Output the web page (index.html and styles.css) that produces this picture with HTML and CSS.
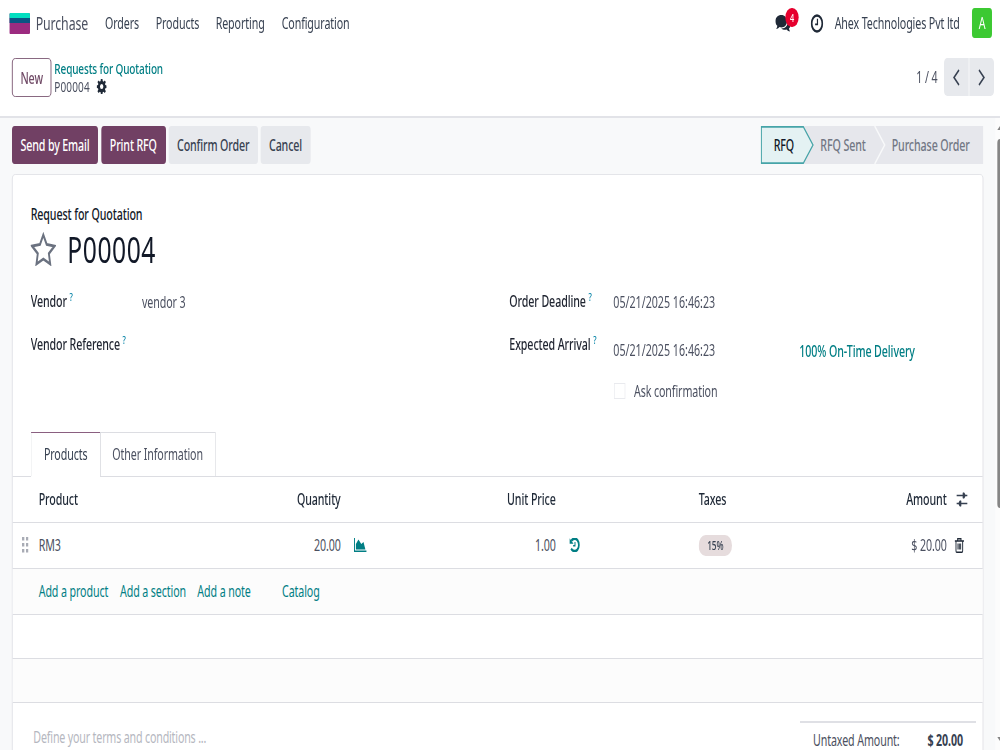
FILE: index.html
```html
<!DOCTYPE html>
<html lang="en">
<head>
  <meta charset="UTF-8" />
  <meta name="viewport" content="width=device-width, initial-scale=1.0" />
  <title>P00004 - Purchase</title>
  <link rel="stylesheet" href="styles.css">
</head>
<body>
  <div class="page">
    <header class="navbar">
      <svg class="logo" viewBox="0 0 30 21" preserveAspectRatio="none">
        <rect width="30" height="21" rx="1.5" fill="#9c2b80"/>
        <path d="M0 5h30v5H0z" fill="#0b5583"/>
        <path d="M0 5V1.5Q0 0 1.5 0h27Q30 0 30 1.5V5z" fill="#02dfc0"/>
      </svg>
      <span class="app-name">Purchase</span>
      <nav class="menu">
        <a class="m-orders">Orders</a>
        <a class="m-products">Products</a>
        <a class="m-reporting">Reporting</a>
        <a class="m-config">Configuration</a>
      </nav>
      <div class="systray">
        <div class="messages">
          <svg width="23" height="17" viewBox="0 0 23 17">
            <path d="M9 0c5 0 8.500 2.700 8.500 6.200S14 12.400 9 12.400c-1 0-1.800-.1-2.600-.3C4.800 13.400 3 14 1.200 14c1-.9 1.700-1.900 1.800-3.200C1.100 9.700 0 8 0 6.200 0 2.700 4 0 9 0z" fill="#1f2937"/>
            <path d="M19.500 5c2.200 1.100 3.500 2.700 3.500 4.600 0 1.600-.9 3-2.500 4 .1 1.100.8 2 1.700 2.900-2.200 0-4-.7-5.300-1.900-3 .5-6 .1-8.200-1.100 6 .3 10.800-3 10.800-8.500z" fill="#1f2937"/>
          </svg>
          <span class="badge">4</span>
        </div>
        <svg class="clock" width="19" height="19" viewBox="0 0 19 19" fill="none" stroke="#1f2937">
          <circle cx="9.500" cy="9.500" r="8" stroke-width="2.600"/>
          <path d="M10.200 4.800v5.500H6.700" stroke-width="1.800"/>
        </svg>
        <span class="company">Ahex Technologies Pvt ltd</span>
        <span class="avatar">A</span>
      </div>
    </header>

    <div class="control-panel">
      <button class="btn btn-new">New</button>
      <div class="breadcrumb">
        <a class="crumb">Requests for Quotation</a>
        <div class="current">
          <span class="current-name">P00004</span>
          <svg width="15" height="15" viewBox="0 0 16 16">
            <path fill="#1f2937" fill-rule="evenodd" d="M6.700 0h2.600l.4 2.200 1.300.6L12.900 1.500l1.800 1.800-1.400 1.900.6 1.300 2.100.4v2.600l-2.100.4-.6 1.300 1.400 1.900-1.800 1.800-1.900-1.400-1.300.6-.4 1.900H6.700l-.4-1.900-1.300-.6-1.900 1.400-1.800-1.800 1.400-1.900-.6-1.300L0 9.500V6.900l2.100-.4.6-1.300-1.400-1.900 1.800-1.800L5 2.800l1.300-.6zM8 5.300a2.700 2.700 0 1 0 0 5.400 2.700 2.700 0 0 0 0-5.400z"/>
          </svg>
        </div>
      </div>
      <div class="pager">
        <span class="pager-count">1 / 4</span>
        <button class="pager-btn prev"><svg width="11" height="17" viewBox="0 0 11 17"><path d="M9.500 1 2 8.500 9.500 16"/></svg></button>
        <button class="pager-btn next"><svg width="11" height="17" viewBox="0 0 11 17"><path d="M1.500 1 9 8.500 1.500 16"/></svg></button>
      </div>
    </div>

    <main class="form">
      <div class="statusbar">
        <button class="btn btn-primary b-send">Send by Email</button>
        <button class="btn btn-primary b-print">Print RFQ</button>
        <button class="btn btn-secondary b-confirm">Confirm Order</button>
        <button class="btn btn-secondary b-cancel">Cancel</button>
        <div class="stages">
          <svg class="stage-shapes" width="334" height="38" viewBox="0 0 334 38">
            <path d="M60 0h274v38H60z" fill="#e6e7ec"/>
            <path d="M171 0l15 19-15 19" fill="none" stroke="#f8f9fa" stroke-width="2"/>
            <path d="M1 .8h63L78.500 19 64 37.200H1z" fill="#e4f2f3" stroke="#46a4a8" stroke-width="1.700"/>
          </svg>
          <span class="stage active">RFQ</span>
          <span class="stage sent">RFQ Sent</span>
          <span class="stage order">Purchase Order</span>
        </div>
      </div>

      <section class="sheet">
        <div class="title">
          <div class="title-label">Request for Quotation</div>
          <div class="title-name">
            <svg width="38" height="34" viewBox="0 0 38 34" preserveAspectRatio="none">
              <path d="M19 2.800l5 9.700 11.800 1.600-8.500 7.500 2 10.400L19 27.100 8.700 32l2-10.400-8.500-7.500L14 12.500z" fill="none" stroke="#6b7280" stroke-width="2.800"/>
            </svg>
            <h1>P00004</h1>
          </div>
        </div>

        <div class="fields">
          <div class="column">
            <div class="field">
              <label class="l-vendor">Vendor<sup>?</sup></label>
              <span class="value">vendor 3</span>
            </div>
            <div class="field">
              <label class="l-reference">Vendor Reference<sup>?</sup></label>
            </div>
          </div>
          <div class="column column-right">
            <div class="field">
              <label class="l-deadline">Order Deadline<sup>?</sup></label>
              <span class="value date">05/21/2025 16:46:23</span>
            </div>
            <div class="field field-arrival">
              <label class="l-arrival">Expected Arrival<sup>?</sup></label>
              <span class="value date">05/21/2025 16:46:23</span>
              <a class="on-time">100% On-Time Delivery</a>
            </div>
            <div class="confirmation">
              <span class="checkbox"></span>
              <span class="ask">Ask confirmation</span>
            </div>
          </div>
        </div>

        <div class="tabs">
          <a class="tab active">Products</a>
          <a class="tab other">Other Information</a>
        </div>

        <div class="lines">
          <div class="row head">
            <span></span>
            <span>Product</span>
            <span class="num">Quantity</span>
            <span></span>
            <span class="num">Unit Price</span>
            <span></span>
            <span>Taxes</span>
            <span class="num">Amount</span>
            <span class="icon-end">
              <svg width="18" height="15" viewBox="0 0 18 15" stroke="#374151" fill="#374151">
                <path d="M1 3.500h16M1 11.500h16" stroke-width="1.600"/>
                <path d="M11 0v7l4-3.500zM7 8v7l-4-3.500z" stroke="none"/>
                <path d="M10 .8h3v5.400h-3zM5 8.800h3v5.400H5z" stroke="none"/>
              </svg>
            </span>
          </div>
          <div class="row">
            <span class="handle">
              <svg width="10" height="16" viewBox="0 0 10 16" fill="#a9acb5">
                <path d="M0 0h3.500v3.500H0zM6 0h3.500v3.500H6zM0 6h3.500v3.500H0zM6 6h3.500v3.500H6zM0 12h3.500v3.500H0zM6 12h3.500v3.500H6z"/>
              </svg>
            </span>
            <span>RM3</span>
            <span class="num">20.00</span>
            <span class="icon">
              <svg width="19" height="14" viewBox="0 0 20 14" preserveAspectRatio="none" fill="#017e84">
                <path d="M0 0h1.500v12.500H20V14H0zM3 11.500V6l4-4.500L11.500 6 15 4l3 7.500z"/>
              </svg>
            </span>
            <span class="num">1.00</span>
            <span class="icon">
              <svg width="16" height="14" viewBox="0 0 16 14" fill="none" stroke="#017e84">
                <path d="M3 2.800C6-.2 10 .3 12.300 2.300c2.700 2.600 2.700 6.800 0 9.200-2.600 2.300-7 2.200-9.600-.8" stroke-width="2.600"/>
                <path d="M.3.300v5.500h6z" fill="#017e84" stroke="none"/>
                <path d="M8.500 4v3.800H5.700" stroke-width="1.500"/>
              </svg>
            </span>
            <span><span class="tag">15%</span></span>
            <span class="num">$ 20.00</span>
            <span class="icon-end trash">
              <svg width="14" height="15" viewBox="0 0 14 15" fill="none" stroke="#1f2937">
                <path d="M0 3h14M4.500 3V.8h5V3" stroke-width="1.500"/>
                <path d="M2 3v10q0 1.200 1.200 1.200h7.600Q12 14.200 12 13V3M5 5.500v6M7 5.500v6M9 5.500v6" stroke-width="1.400"/>
              </svg>
            </span>
          </div>
          <div class="row-links">
            <a class="a-product">Add a product</a>
            <a class="a-section">Add a section</a>
            <a class="a-note">Add a note</a>
            <a class="a-catalog">Catalog</a>
          </div>
          <div class="row-empty"></div>
          <div class="row-empty shaded"></div>
        </div>

        <div class="footer">
          <div class="terms">Define your terms and conditions ...</div>
          <div class="totals">
            <span class="untaxed">Untaxed Amount:</span>
            <strong>$ 20.00</strong>
          </div>
        </div>
      </section>

      <div class="scrollbar">
        <span class="arrow up"></span>
        <span class="thumb"></span>
        <span class="arrow down"></span>
      </div>
    </main>
  </div>
</body>
</html>
```
FILE: styles.css
```css
* {
  box-sizing: border-box;
}
html {
  overflow: hidden;
}
body {
  width: 1000px;
  height: 750px;
  margin: 0;
  overflow: hidden;
  background: #fff;
}
/* laid out 1500px wide, then condensed to the window */
.page {
  display: flex;
  flex-direction: column;
  width: 1500px;
  height: 750px;
  margin-right: -500px;
  overflow: hidden;
  transform: scaleX(0.66666);
  transform-origin: 0 0;
  font-family: "Noto Sans", "Open Sans", sans-serif;
  font-size: 16px;
  line-height: 20px;
  letter-spacing: -0.15px;
  color: #4b5060;
  white-space: nowrap;
}
h1 {
  margin: 0;
}
svg {
  display: block;
  flex: none;
}

/* top bar */
.navbar {
  display: flex;
  align-items: center;
  height: 46px;
  padding: 0 12px 0 13.5px;
}
.logo {
  width: 31px;
  height: 21px;
}
.app-name {
  width: 104px;
  margin-left: 9px;
  font-size: 18.5px;
}
.menu {
  display: flex;
  color: #374151;
}
.m-orders {
  width: 76px;
}
.m-products {
  width: 90px;
}
.m-reporting {
  width: 99px;
}
.systray {
  display: flex;
  align-items: center;
  margin-left: auto;
  color: #374151;
}
.messages {
  position: relative;
  width: 53px;
}
.badge {
  position: absolute;
  left: 15px;
  top: -7px;
  width: 20px;
  height: 19px;
  border-radius: 10px;
  background: #e6002e;
  color: #fff;
  font-size: 11px;
  font-weight: 500;
  line-height: 19px;
  text-align: center;
}
.company {
  width: 206px;
  margin-left: 17px;
}
.avatar {
  width: 30px;
  height: 30px;
  border-radius: 4px;
  background: #3cc932;
  color: #fff;
  line-height: 30px;
  text-align: center;
}

/* breadcrumb and pager */
.control-panel {
  display: flex;
  align-items: flex-start;
  height: 72px;
  padding: 12px 9px 0 18px;
  border-bottom: 2px solid #e2e3e8;
}
.btn {
  height: 38px;
  padding: 0;
  border: 0;
  border-radius: 4px;
  font: inherit;
  font-weight: 500;
  letter-spacing: -0.2px;
}
.btn-new {
  width: 59px;
  height: 39px;
  border: 1.5px solid #714b67;
  border-radius: 5px;
  background: #fff;
  color: #714b67;
}
.breadcrumb {
  margin-left: 4.5px;
  padding-top: 1px;
  font-size: 15px;
  line-height: 18px;
}
.crumb {
  display: block;
  color: #017e84;
  font-weight: 500;
  letter-spacing: -0.2px;
}
.current {
  display: flex;
  align-items: center;
}
.current-name {
  width: 63px;
  letter-spacing: 0.2px;
}
.pager {
  display: flex;
  align-items: center;
  margin-left: auto;
}
.pager-count {
  width: 41px;
}
.pager-btn {
  display: flex;
  align-items: center;
  justify-content: center;
  width: 37px;
  height: 38px;
  padding: 0;
  border: 0;
  background: #e7e9ed;
}
.pager-btn path {
  fill: none;
  stroke: #374151;
  stroke-width: 2;
}
.prev {
  border-radius: 5px 0 0 5px;
}
.next {
  margin-left: 1.5px;
  border-radius: 0 5px 5px 0;
}

/* form */
.form {
  position: relative;
  flex: 1;
  min-height: 0;
  padding: 8px 25.5px 0 18px;
  background: #f8f9fa;
}
.statusbar {
  display: flex;
  gap: 4.5px;
  height: 38px;
}
.btn-primary {
  background: #714064;
  color: #fff;
}
.btn-secondary {
  background: #e7e9ed;
  color: #374151;
}
.b-send {
  width: 129px;
}
.b-print {
  width: 97px;
}
.b-confirm {
  width: 133.5px;
}
.b-cancel {
  width: 74.5px;
}
.stages {
  position: relative;
  display: flex;
  align-items: center;
  width: 334px;
  margin-left: auto;
  color: #727784;
  font-weight: 500;
}
.stage-shapes {
  position: absolute;
  left: 0;
  top: 0;
}
.stage {
  position: relative;
}
.stage.active {
  width: 70px;
  padding-left: 20px;
  color: #111827;
}
.stage.sent {
  width: 107px;
  padding-left: 20px;
}
.stage.order {
  padding-left: 20px;
}

/* sheet */
.sheet {
  height: 600px;
  margin-top: 10px;
  border: 1.5px solid #dfe0e5;
  border-radius: 5px;
  background: #fff;
}
.title {
  height: 105px;
  padding: 29px 27px 0;
  color: #111827;
}
.title-label {
  font-weight: 500;
}
.title-name {
  display: flex;
  align-items: center;
  gap: 17px;
  height: 50px;
}
.title-name h1 {
  font-size: 37px;
  font-weight: 400;
  line-height: 50px;
  letter-spacing: 0.8px;
}
.fields {
  display: grid;
  grid-template-columns: 718px 1fr;
  height: 151.5px;
  padding: 11px 27px 0;
}
.field {
  display: flex;
  height: 42.5px;
}
.field label {
  width: 167px;
  color: #1f2430;
  font-weight: 500;
}
.column-right .field label {
  width: 156px;
}
.field sup {
  margin-left: 4px;
  color: #0180a5;
  font-size: 11px;
  line-height: 0;
  vertical-align: 6px;
}
.value {
  padding-top: 1px;
}
.date {
  letter-spacing: 0;
}
.field-arrival .value {
  width: 279px;
  padding-top: 6px;
}
.on-time {
  padding-top: 7px;
  color: #017e84;
  font-weight: 500;
}
.confirmation {
  display: flex;
  align-items: center;
  gap: 13px;
  padding: 5px 0 0 157px;
}
.checkbox {
  width: 17px;
  height: 16px;
  border: 1.5px solid #e9eaee;
}

/* notebook */
.tabs {
  display: flex;
  height: 45px;
  padding-left: 27px;
  border-bottom: 1.5px solid #dcdde2;
}
.tab {
  height: 45px;
  border: 1.5px solid #dcdde2;
  line-height: 42px;
  text-align: center;
}
.tab.active {
  width: 105px;
  border-top-color: #8a5f80;
  border-bottom-color: #fff;
  background: #fff;
  color: #374151;
}
.tab.other {
  width: 174px;
  margin-left: -1.5px;
}
.row {
  display: grid;
  grid-template-columns: 39px 200px 253px 83px 239.5px 214.5px 200px 172px 1fr;
  align-items: center;
  height: 46px;
  border-bottom: 1.5px solid #dcdde2;
}
.head {
  color: #1f2937;
  font-weight: 500;
}
.num {
  text-align: right;
}
.handle {
  padding-left: 13.5px;
}
.icon {
  padding-left: 20px;
}
.icon-end {
  padding-left: 14px;
}
.icon-end.trash {
  padding-left: 12px;
}
.tag {
  display: inline-block;
  width: 50px;
  height: 21px;
  border-radius: 11px;
  background: #e6dcdd;
  color: #374151;
  font-size: 12.500px;
  font-weight: 500;
  line-height: 21px;
  text-align: center;
  vertical-align: middle;
}
.row-links {
  display: flex;
  align-items: center;
  height: 46px;
  padding-left: 39px;
  border-bottom: 1.5px solid #dcdde2;
  background: #fcfcfc;
  color: #017e84;
}
.a-product {
  width: 122px;
}
.a-section {
  width: 116px;
}
.a-note {
  width: 127px;
}
.row-empty {
  height: 44px;
  border-bottom: 1.5px solid #dcdde2;
}
.shaded {
  background: #fcfcfc;
}
.footer {
  display: flex;
  justify-content: space-between;
  padding: 18px 10px 0 31px;
}
.terms {
  padding-top: 6px;
  color: #b5b7c0;
  letter-spacing: -0.25px;
}
.totals {
  display: flex;
  justify-content: space-between;
  width: 264px;
  padding: 7px 19px 0 20px;
  border-top: 2px solid #dfe0e5;
}
.totals strong {
  color: #374151;
  font-weight: 700;
}

/* page scrollbar, cut by the window edge */
.scrollbar {
  position: absolute;
  top: 0;
  right: 0;
  bottom: 0;
  width: 7px;
  background: #fcfcfc;
}
.thumb {
  position: absolute;
  top: 21px;
  right: 0;
  width: 4px;
  height: 369px;
  border-radius: 4px 0 0 4px;
  background: #858585;
}
.arrow {
  position: absolute;
  right: 0;
  border-right: 4px solid #858585;
}
.arrow.up {
  top: 8px;
  border-top: 4px solid transparent;
}
.arrow.down {
  bottom: 9px;
  border-bottom: 4px solid transparent;
}
```
